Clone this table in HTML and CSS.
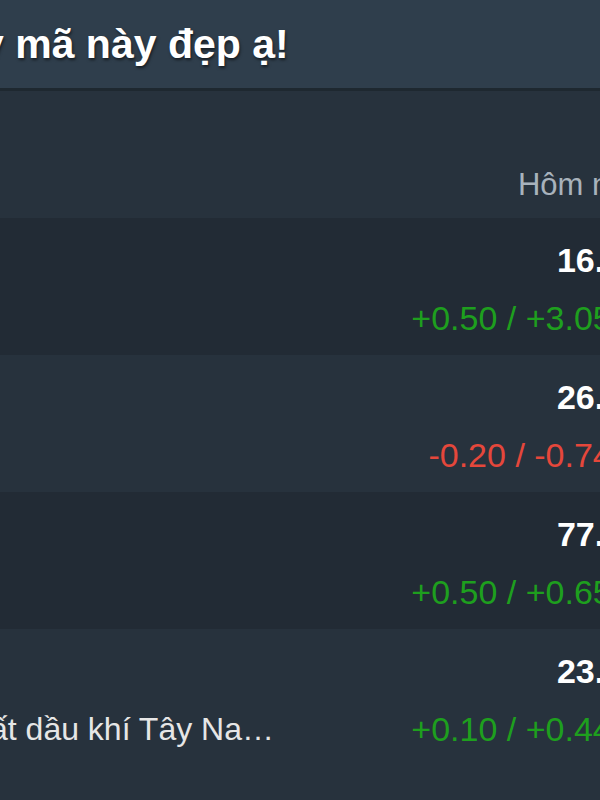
FILE: index.html
```html
<!DOCTYPE html>
<html lang="vi">
<head>
  <meta charset="UTF-8">
  <title>Danh mục</title>
  <meta name="viewport" content="width=device-width, initial-scale=1">
  <link rel="stylesheet" href="styles.css">
</head>
<body>

  <header class="topbar">
    <h2 class="title">y mã này đẹp ạ!</h2>
  </header>

  <div class="board">
    <!-- tiêu đề cột -->
    <div class="board-head">
      <span class="col-label">Hôm nay</span>
    </div>

    <div class="stock-row">
      <div class="stock-info"></div>
      <div class="stock-price">
        <span class="price">16.90</span>
        <span class="change up">+0.50 / +3.05%</span>
      </div>
    </div>

    <div class="stock-row">
      <div class="stock-info"></div>
      <div class="stock-price">
        <span class="price">26.90</span>
        <span class="change down">-0.20 / -0.74%</span>
      </div>
    </div>

    <div class="stock-row">
      <div class="stock-info"></div>
      <div class="stock-price">
        <span class="price">77.50</span>
        <span class="change up">+0.50 / +0.65%</span>
      </div>
    </div>

    <div class="stock-row">
      <div class="stock-info">
        <span class="code">&nbsp;</span>
        <span class="name">ất dầu khí Tây Na…</span>
      </div>
      <div class="stock-price">
        <span class="price">23.00</span>
        <span class="change up">+0.10 / +0.44%</span>
      </div>
    </div>
  </div>

</body>
</html>
```

FILE: styles.css
```css
  * {
    box-sizing: border-box;
  }

  body {
    font-family: 'Liberation Sans', Arial, sans-serif;
    margin: 0;
    background: #27323d;
    color: #fff;
    width: 600px;
    height: 800px;
    overflow: hidden;
  }

  .topbar {
    height: 91px;
    background: #2f3e4c;
    border-bottom: 3px solid #1e2830;
    padding-top: 20px;
  }

  .title {
    margin: 0 0 0 -19px;
    font-size: 41px;
    line-height: 48px;
    font-weight: bold;
    white-space: nowrap;
    color: #fff;
    text-shadow: 1px 2px 3px rgba(0,0,0,0.55);
  }

  .board {
    width: 660px;
    padding-right: 18px;
  }

  .board-head {
    height: 127px;
    padding-top: 74px;
    text-align: right;
  }

  .col-label {
    font-size: 31px;
    line-height: 40px;
    color: #a8b2bc;
  }

  .stock-row {
    display: flex;
    justify-content: space-between;
    height: 137px;
    padding-top: 22px;
    margin-right: -18px;
    padding-right: 18px;
  }

  .stock-row:nth-child(even) {
    background: #222b35;
  }

  .stock-info, .stock-price {
    display: flex;
    flex-direction: column;
    gap: 18px;
  }

  .stock-price {
    align-items: flex-end;
  }

  .price, .change, .code, .name {
    line-height: 40px;
    white-space: nowrap;
  }

  .price {
    font-size: 34px;
    font-weight: bold;
    color: #fff;
  }

  .change {
    font-size: 34px;
  }

  .up {
    color: #1e9f1e;
  }

  .down {
    color: #e5473b;
  }

  .name {
    margin-left: -10px;
    font-size: 32px;
    color: #e6e6e6;
  }
```
